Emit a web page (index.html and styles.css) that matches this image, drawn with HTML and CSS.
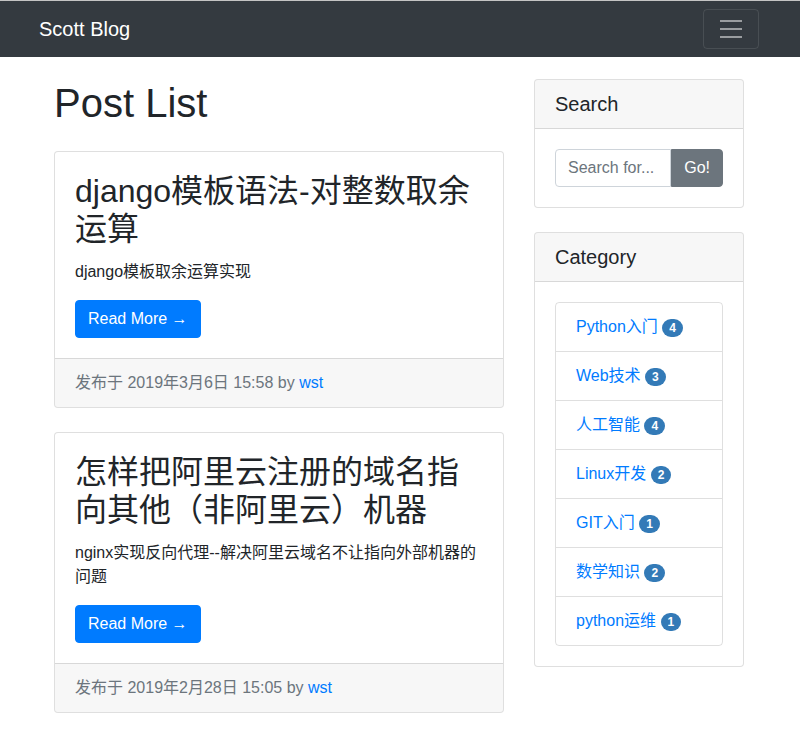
FILE: index.html
```html
<!DOCTYPE html>
<html lang="zh-CN">
<head>
<meta charset="utf-8">
<title>Scott Blog</title>
<link rel="stylesheet" href="styles.css">
</head>
<body>
<div class="topline"></div>
<nav class="navbar">
  <div class="nav-inner">
    <a class="brand" href="#">Scott Blog</a>
    <button class="toggler" type="button" aria-label="Toggle navigation">
      <svg width="30" height="30" viewBox="0 0 30 30"><path d="M4 7h22M4 15h22M4 23h22" stroke="rgba(255,255,255,0.5)" stroke-width="2" stroke-linecap="butt" fill="none"/></svg>
    </button>
  </div>
</nav>
<div class="container">
  <div class="row">
    <main class="main">
      <h1 class="page-title">Post List</h1>
      <div class="card post">
        <div class="card-body">
          <h2 class="card-title">django模板语法-对整数取余运算</h2>
          <p class="card-text">django模板取余运算实现</p>
          <a class="btn btn-primary" href="#">Read More &rarr;</a>
        </div>
        <div class="card-footer">发布于 2019年3月6日 15:58 by <a href="#">wst</a></div>
      </div>
      <div class="card post">
        <div class="card-body">
          <h2 class="card-title">怎样把阿里云注册的域名指向其他（非阿里云）机器</h2>
          <p class="card-text">nginx实现反向代理--解决阿里云域名不让指向外部机器的问题</p>
          <a class="btn btn-primary" href="#">Read More &rarr;</a>
        </div>
        <div class="card-footer">发布于 2019年2月28日 15:05 by <a href="#">wst</a></div>
      </div>
    </main>
    <aside class="side">
      <div class="card widget">
        <h5 class="card-header">Search</h5>
        <div class="card-body">
          <div class="input-group">
            <input class="form-control" type="text" placeholder="Search for...">
            <button class="btn btn-secondary" type="button">Go!</button>
          </div>
        </div>
      </div>
      <div class="card widget">
        <h5 class="card-header">Category</h5>
        <div class="card-body">
          <ul class="list-group">
            <li class="list-item"><a href="#">Python入门</a> <span class="badge">4</span></li>
            <li class="list-item"><a href="#">Web技术</a> <span class="badge">3</span></li>
            <li class="list-item"><a href="#">人工智能</a> <span class="badge">4</span></li>
            <li class="list-item"><a href="#">Linux开发</a> <span class="badge">2</span></li>
            <li class="list-item"><a href="#">GIT入门</a> <span class="badge">1</span></li>
            <li class="list-item"><a href="#">数学知识</a> <span class="badge">2</span></li>
            <li class="list-item"><a href="#">python运维</a> <span class="badge">1</span></li>
          </ul>
        </div>
      </div>
    </aside>
  </div>
</div>
</body>
</html>
```
FILE: styles.css
```css
* { box-sizing: border-box; }
html, body { margin: 0; padding: 0; }
body {
  font-family: "Liberation Sans", "Noto Sans CJK SC", sans-serif;
  font-size: 16px;
  line-height: 1.5;
  color: #212529;
  background: #fff;
}
a { color: #007bff; text-decoration: none; }

.topline { height: 1px; background: #c4c4c4; }

.navbar { background: #343a40; height: 56px; }
.nav-inner {
  height: 56px;
  display: flex;
  align-items: center;
  justify-content: space-between;
  padding: 0 41px 0 39px;
}
.brand {
  color: #fff;
  font-size: 20px;
  line-height: 30px;
  padding: 5px 0;
}
.toggler {
  width: 56px;
  height: 40px;
  padding: 4px 12px;
  background: transparent;
  border: 1px solid rgba(255,255,255,0.1);
  border-radius: 4px;
  display: flex;
  align-items: center;
  justify-content: center;
}
.toggler svg { display: block; }

.container {
  width: 722px;
  margin: 0 auto;
  padding: 22px 15px 0;
}
.row {
  display: grid;
  grid-template-columns: 450px 210px;
  column-gap: 30px;
  align-items: start;
}

.page-title {
  font-size: 40px;
  line-height: 48px;
  font-weight: 400;
  margin: 0 0 24px;
}

.card {
  border: 1px solid rgba(0,0,0,0.125);
  border-radius: 4px;
  background: #fff;
  margin-bottom: 24px;
  overflow: hidden;
}
.card-body { padding: 20px; }
.card-title {
  font-size: 32px;
  line-height: 38px;
  font-weight: 400;
  margin: 0 0 12px;
}
.card-text { margin: 0 0 16px; line-height: 24px; }
.card-footer {
  padding: 12px 20px;
  line-height: 24px;
  background: rgba(0,0,0,0.03);
  border-top: 1px solid rgba(0,0,0,0.125);
  color: #6c757d;
}

.btn {
  display: inline-block;
  font-size: 16px;
  line-height: 24px;
  padding: 6px 12px;
  border: 1px solid transparent;
  border-radius: 4px;
  font-family: inherit;
}
.post .btn { vertical-align: top; }
.btn-primary { background: #007bff; border-color: #007bff; color: #fff; }
.btn-secondary { background: #6c757d; border-color: #6c757d; color: #fff; }

.card-header {
  margin: 0;
  padding: 12px 20px;
  font-size: 20px;
  line-height: 24px;
  font-weight: 400;
  background: rgba(0,0,0,0.03);
  border-bottom: 1px solid rgba(0,0,0,0.125);
}

.input-group { display: flex; }
.form-control {
  flex: 1 1 auto;
  min-width: 0;
  height: 38px;
  padding: 6px 12px;
  font-size: 16px;
  line-height: 24px;
  font-family: inherit;
  color: #495057;
  border: 1px solid #ced4da;
  border-radius: 4px 0 0 4px;
}
.form-control::placeholder { color: #6c757d; }
.input-group .btn { border-radius: 0 4px 4px 0; height: 38px; }

.list-group {
  list-style: none;
  margin: 0;
  padding: 0;
  border: 1px solid rgba(0,0,0,0.125);
  border-radius: 4px;
}
.list-item {
  padding: 12px 20px;
  line-height: 24px;
  border-top: 1px solid rgba(0,0,0,0.125);
}
.list-item:first-child { border-top: 0; }
.badge {
  display: inline-block;
  font-size: 12px;
  font-weight: 700;
  line-height: 1;
  padding: 3px 7px;
  border-radius: 10px;
  background: #337ab7;
  color: #fff;
  vertical-align: baseline;
}
```
